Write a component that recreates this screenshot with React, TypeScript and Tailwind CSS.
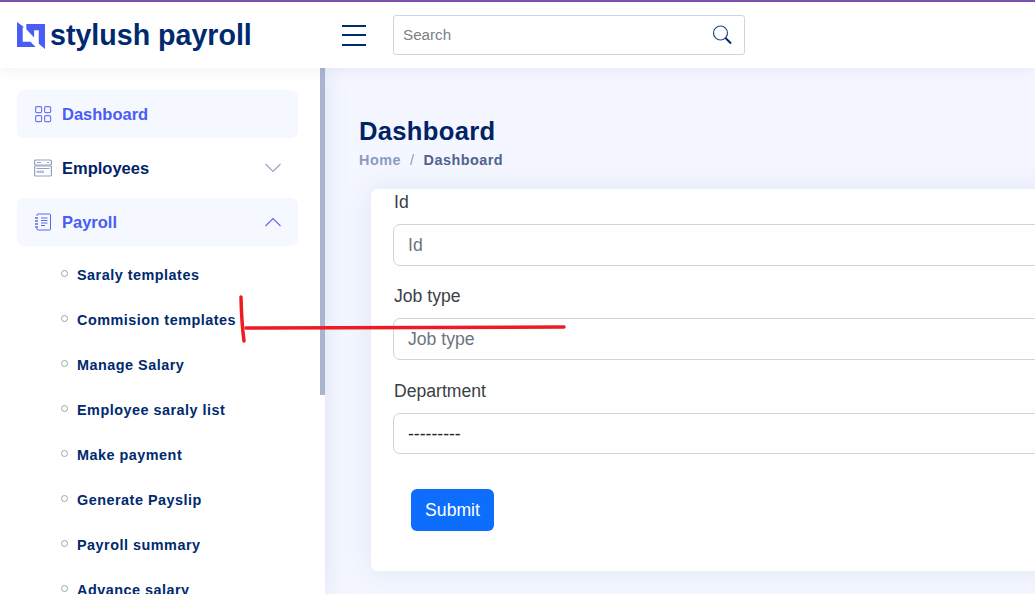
const subItems = [
    'Saraly templates',
    'Commision templates',
    'Manage Salary',
    'Employee saraly list',
    'Make payment',
    'Generate Payslip',
    'Payroll summary',
    'Advance salary',
];

const Logo = () => (
    <svg width="28" height="27" viewBox="0 0 27 26" className="shrink-0">
        <path d="M0 0 L7 5 H5.5 V19 H13 L18 24 H0 Z" fill="#4a5cf6" />
        <path d="M9 2 H27 V26 L21 21 V8 H16.5 V15 L9 7 Z" fill="#4a5cf6" />
    </svg>
);

const DashboardIcon = () => (
    <svg width="18" height="18" viewBox="0 0 18 18" fill="none" stroke="#6f78f2" strokeWidth="1.2">
        <rect x="1.6" y="1.6" width="6" height="6" rx="1.2" />
        <rect x="10.6" y="1.6" width="6" height="6" rx="1.2" />
        <rect x="1.6" y="10.6" width="6" height="6" rx="1.2" />
        <rect x="10.6" y="10.6" width="6" height="6" rx="1.2" />
    </svg>
);

const EmployeesIcon = () => (
    <svg width="18" height="18" viewBox="0 0 18 18" fill="none" stroke="#93a2c0" strokeWidth="1.2">
        <rect x="0.6" y="1" width="16.8" height="5" rx="1" />
        <rect x="0.6" y="7" width="16.8" height="10" rx="1" />
        <path d="M3 3.5 H7 M13 3.5 H15 M2.5 9.5 H15.5" />
        <path d="M2.5 12.8 H10" strokeWidth="2.4" stroke="#b3bdd3" />
    </svg>
);

const PayrollIcon = () => (
    <svg width="18" height="18" viewBox="0 0 18 18" fill="none" stroke="#5a67f0" strokeWidth="1">
        <path d="M3 3 V2 a1 1 0 0 1 1 -1 H15.5 a1 1 0 0 1 1 1 V16 a1 1 0 0 1 -1 1 H4 a1 1 0 0 1 -1 -1 V15" />
        <path d="M7 5 H13.5 M7 7.5 H13.5 M7 10 H13.5 M7 12.5 H11" />
        <path d="M1 5 H4 M1 8 H4 M1 11 H4 M1 14 H4" strokeWidth="1.4" />
    </svg>
);

const Chevron = ({ up, color }: { up?: boolean; color: string }) => (
    <svg width="18" height="10" viewBox="0 0 18 10" fill="none" stroke={color} strokeWidth="1.1">
        <path d={up ? 'M1.5 9 L9 1.5 L16.5 9' : 'M1.5 1 L9 8.5 L16.5 1'} />
    </svg>
);

const SearchIcon = () => (
    <svg width="20" height="20" viewBox="0 0 20 20" fill="none" stroke="#2a4a85">
        <circle cx="8.5" cy="8" r="7" strokeWidth="1.2" />
        <path d="M13.5 13 L19 18.5" strokeWidth="2" stroke="#002366" />
    </svg>
);

const Field = ({ label, placeholder }: { label: string; placeholder: string }) => (
    <div className="flex flex-col">
        <label className="h-[26px] pl-[1px] leading-[26px] text-[17.6px] text-[#3b4046]">{label}</label>
        <input
            placeholder={placeholder}
            className="mt-[9px] h-[42px] w-full rounded-[7px] border border-[#d0d4de] bg-transparent pr-[13px] pl-[14px] text-[17.6px] placeholder:text-[#6c757d]"
        />
    </div>
);

const App = () => {
    return (
        <div className="relative flex h-[594px] w-[1035px] flex-col overflow-hidden bg-[#f4f7ff] font-['Liberation_Sans',Arial,sans-serif]">
            <header className="relative z-20 flex h-[68px] shrink-0 items-center border-t-2 border-[#7b52ab] bg-white shadow-[0_2px_12px_rgba(40,70,140,0.08)]">
                <div className="flex w-[325px] shrink-0 items-center gap-[5px] pl-[17px]">
                    <Logo />
                    <span className="whitespace-nowrap text-[28.6px] leading-none font-bold text-[#002a6e]">
                        stylush payroll
                    </span>
                </div>
                <button className="ml-[17px] flex w-[24px] flex-col gap-[7.5px]">
                    <span className="h-[2px] bg-[#002a6e]" />
                    <span className="h-[2px] bg-[#002a6e]" />
                    <span className="h-[2px] bg-[#002a6e]" />
                </button>
                <div className="ml-[27px] flex h-[40px] w-[352px] items-center justify-between rounded-[3px] border border-[#ccd4e6] pr-[12px] pl-[9px]">
                    <span className="text-[15.2px] text-[#7a7f86]">Search</span>
                    <SearchIcon />
                </div>
            </header>
            <div className="flex min-h-0 flex-1">
                <aside className="relative z-10 flex w-[325px] shrink-0 bg-white shadow-[0_0_24px_rgba(40,70,140,0.12)]">
                    <nav className="flex flex-1 flex-col gap-[6px] overflow-hidden pt-[22px] pl-[17px] pr-[22px]">
                        <div className="flex h-[48px] shrink-0 items-center gap-[10px] rounded-[7px] bg-[#f5f8ff] pl-[17px]">
                            <DashboardIcon />
                            <span className="text-[16.5px] font-bold text-[#4a5cf6]">Dashboard</span>
                        </div>
                        <div className="flex h-[48px] shrink-0 items-center gap-[10px] pr-[16px] pl-[17px]">
                            <EmployeesIcon />
                            <span className="flex-1 text-[16.5px] font-bold text-[#002366]">Employees</span>
                            <Chevron color="#93a4c0" />
                        </div>
                        <div className="flex h-[48px] shrink-0 items-center gap-[10px] rounded-[7px] bg-[#f5f8ff] pr-[16px] pl-[17px]">
                            <PayrollIcon />
                            <span className="flex-1 text-[16.5px] font-bold text-[#4a5cf6]">Payroll</span>
                            <Chevron up color="#5a67f0" />
                        </div>
                        <ul className="mt-[1px] flex flex-col">
                            {subItems.map((item) => (
                                <li key={item} className="flex h-[45px] shrink-0 items-center pl-[44px]">
                                    <span className="mb-[5px] h-[7px] w-[7px] rounded-full border border-[#9aa8a4]" />
                                    <span className="ml-[9px] text-[14.4px] font-bold tracking-[0.5px] whitespace-nowrap text-[#002a6e]">
                                        {item}
                                    </span>
                                </li>
                            ))}
                        </ul>
                    </nav>
                    <div className="w-[5px] shrink-0">
                        <div className="h-[327px] bg-[#a9b4cf]" />
                    </div>
                </aside>
                <main className="min-w-0 flex-1 overflow-hidden">
                    <div className="pt-[46px] pl-[34px]">
                        <h1 className="text-[25.6px] leading-[34px] font-bold tracking-[0.3px] text-[#002366]">
                            Dashboard
                        </h1>
                        <div className="mt-[2px] flex gap-[9px] text-[14.4px] leading-[20px] font-bold tracking-[0.5px]">
                            <span className="text-[#8b9bc0]">Home</span>
                            <span className="font-normal text-[#8b9bc0]">/</span>
                            <span className="text-[#50628f]">Dashboard</span>
                        </div>
                    </div>
                    <div className="mt-[19px] ml-[46px] h-[382px] w-[800px] rounded-[6px] bg-white pl-[22px] shadow-[0_0_30px_rgba(40,70,140,0.1)]">
                        <div className="flex flex-col">
                            <Field label="Id" placeholder="Id" />
                            <div className="mt-[17px]">
                                <Field label="Job type" placeholder="Job type" />
                            </div>
                            <div className="mt-[18px] flex flex-col">
                                <label className="h-[26px] pl-[1px] leading-[26px] text-[17.6px] text-[#3b4046]">Department</label>
                                <select className="mt-[9px] h-[41px] w-full appearance-none rounded-[7px] border border-[#d0d4de] bg-transparent pt-[2px] pr-[13px] pl-[14px] text-[17.6px] text-[#212529]">
                                    <option>---------</option>
                                </select>
                            </div>
                        </div>
                        <button className="mt-[35px] ml-[18px] h-[42px] w-[83px] rounded-[6px] bg-[#0d6efd] text-[17.6px] text-white">
                            Submit
                        </button>
                    </div>
                </main>
            </div>
            {/* hand drawn annotation on top of the page */}
            <svg width="1035" height="594" className="pointer-events-none absolute top-0 left-0 z-30" fill="none" stroke="#ed1c24" strokeLinecap="round">
                <path d="M241 297 Q241.5 322 244 341" strokeWidth="3.5" />
                <path d="M246 328 L564 327" strokeWidth="3.5" />
            </svg>
        </div>
    );
};

export default App;
